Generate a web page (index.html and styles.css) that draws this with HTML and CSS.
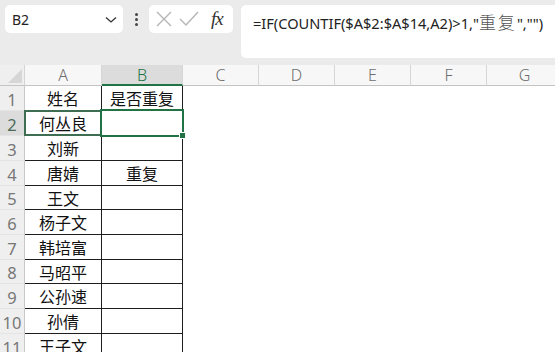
FILE: index.html
```html
<!DOCTYPE html>
<html lang="zh">
<head>
<meta charset="utf-8">
<link rel="stylesheet" href="styles.css">
</head>
<body>
<div class="toolbar">
  <div class="namebox">
    <span class="ref">B2</span>
    <svg class="chev" width="12" height="8" viewBox="0 0 12 8"><path d="M1 1.5 L6 6 L11 1.5" fill="none" stroke="#333" stroke-width="1.3"/></svg>
  </div>
  <div class="dots"><i></i><i></i><i></i></div>
  <div class="fxbox">
    <svg width="18" height="18" viewBox="0 0 18 18"><path d="M2 2 L16 16 M16 2 L2 16" stroke="#b5b5b5" stroke-width="1.4" fill="none"/></svg>
    <svg width="20" height="18" viewBox="0 0 20 18"><path d="M1 9 L7 15 L19 2" stroke="#b5b5b5" stroke-width="1.4" fill="none"/></svg>
    <span class="fx">fx</span>
  </div>
  <div class="formula">=IF(COUNTIF($A$2:$A$14,A2)&gt;1,"<span class="cjk">重复</span>","")</div>
</div>
<div class="sheet">
  <div class="corner"><svg width="14" height="14" viewBox="0 0 14 14"><path d="M14 0 L14 14 L0 14 Z" fill="#d6d6d6"/></svg></div>
  <div class="ch">A</div>
  <div class="ch sel">B</div>
  <div class="ch">C</div>
  <div class="ch">D</div>
  <div class="ch">E</div>
  <div class="ch">F</div>
  <div class="ch">G</div>

  <div class="rh">1</div><div class="c a top">姓名</div><div class="c b top">是否重复</div><div class="e"></div>
  <div class="rh sel">2</div><div class="c a">何丛良<span class="mark-a2"></span></div><div class="c b"><span class="selbox"><span class="handle"></span></span></div><div class="e"></div>
  <div class="rh">3</div><div class="c a">刘新</div><div class="c b"></div><div class="e"></div>
  <div class="rh">4</div><div class="c a">唐婧</div><div class="c b">重复</div><div class="e"></div>
  <div class="rh">5</div><div class="c a">王文</div><div class="c b"></div><div class="e"></div>
  <div class="rh">6</div><div class="c a">杨子文</div><div class="c b"></div><div class="e"></div>
  <div class="rh">7</div><div class="c a">韩培富</div><div class="c b"></div><div class="e"></div>
  <div class="rh">8</div><div class="c a">马昭平</div><div class="c b"></div><div class="e"></div>
  <div class="rh">9</div><div class="c a">公孙速</div><div class="c b"></div><div class="e"></div>
  <div class="rh">10</div><div class="c a">孙倩</div><div class="c b"></div><div class="e"></div>
  <div class="rh">11</div><div class="c a">王子文</div><div class="c b"></div><div class="e"></div>
</div>
</body>
</html>
```
FILE: styles.css
```css
html, body {
  margin: 0;
  padding: 0;
  background: #ffffff;
  overflow: hidden;
  width: 555px;
  height: 352px;
}
body {
  font-family: "Noto Sans", "Noto Sans CJK SC", sans-serif;
}
.toolbar {
  height: 65px;
  background: #ebebeb;
  display: flex;
  align-items: flex-start;
  padding: 5px 0 0 5px;
  box-sizing: border-box;
}
.namebox {
  width: 118px;
  height: 28px;
  background: #fff;
  border-radius: 5px;
  display: flex;
  align-items: center;
  justify-content: space-between;
  padding: 0 6px 0 7px;
  box-sizing: border-box;
  font-size: 14px;
  color: #222;
}
.chev { margin-top: 2px; }
.dots {
  width: 26px;
  height: 28px;
  display: flex;
  flex-direction: column;
  align-items: center;
  justify-content: center;
  gap: 2px;
}
.dots i {
  display: block;
  width: 3px;
  height: 3px;
  border-radius: 50%;
  background: #444;
}
.fxbox {
  width: 84px;
  height: 28px;
  background: #fff;
  border-radius: 5px;
  display: flex;
  align-items: center;
  gap: 6px;
  padding-left: 6px;
  box-sizing: border-box;
}
.fx {
  font-family: "Liberation Serif", "DejaVu Serif", serif;
  font-style: italic;
  font-size: 19px;
  color: #333;
  margin-left: 6px;
  letter-spacing: -1px;
}
.formula {
  margin-left: 8px;
  flex: 1;
  height: 53px;
  background: #fff;
  border-radius: 5px 0 0 5px;
  padding: 4px 0 0 12px;
  box-sizing: border-box;
  font-size: 14.6px;
  color: #222;
  white-space: nowrap;
}
.formula .cjk {
  font-family: "Noto Sans CJK SC", sans-serif;
  color: #555;
  font-size: 17px;
  font-weight: 300;
  letter-spacing: 2px;
}
.sheet {
  display: grid;
  grid-template-columns: 25px 77px 81px 76px 76px 76px 76px 76px;
  grid-template-rows: 21px 25px 25px 25px 25px 24px 25px 25px 24px 25px 25px 25px;
  background: #fff;
}
.corner {
  background: #efefef;
  border-right: 1px solid #d4d4d4;
  border-bottom: 1px solid #c4c4c4;
  display: flex;
  align-items: flex-end;
  justify-content: flex-end;
  padding: 0 2px 2px 0;
  box-sizing: border-box;
}
.ch {
  background: #f7f7f7;
  border-right: 1px solid #d6d6d6;
  border-bottom: 1px solid #c4c4c4;
  box-sizing: border-box;
  display: flex;
  align-items: center;
  justify-content: center;
  font-size: 16px;
  color: #6e6e6e;
  font-weight: 300;
}
.ch.sel {
  background: #dcdcdc;
  color: #217346;
  border-bottom: 2px solid #217346;
}
.rh {
  grid-column: 1;
  background: #efefef;
  border-right: 1px solid #c8c8c8;
  border-bottom: 1px solid #e4e4e4;
  box-sizing: border-box;
  display: flex;
  align-items: center;
  justify-content: center;
  font-size: 16.5px;
  color: #777;
  padding-top: 2px;
}
.rh.sel {
  background: #dcdcdc;
  color: #4b6b58;
}
.c {
  position: relative;
  box-sizing: border-box;
  border-right: 1px solid #1e1e1e;
  border-bottom: 1px solid #1e1e1e;
  display: flex;
  align-items: center;
  justify-content: center;
  font-family: "Noto Sans CJK SC", sans-serif;
  font-size: 16px;
  color: #111;
}
.c.a { grid-column: 2; }
.c.b { grid-column: 3; }
.e { grid-column: 4 / 9; }
.mark-a2 {
  position: absolute;
  left: -1px;
  top: -1px;
  right: -1px;
  bottom: -1px;
  border: 2px solid #3d6e52;
  border-right: none;
  pointer-events: none;
}
.selbox {
  position: absolute;
  left: -2px;
  top: -2px;
  right: -2px;
  bottom: -2px;
  border: 2px solid #217346;
  pointer-events: none;
  z-index: 2;
}
.handle {
  position: absolute;
  right: -4px;
  bottom: -4px;
  width: 5px;
  height: 5px;
  background: #217346;
  border: 1px solid #fff;
}
```
